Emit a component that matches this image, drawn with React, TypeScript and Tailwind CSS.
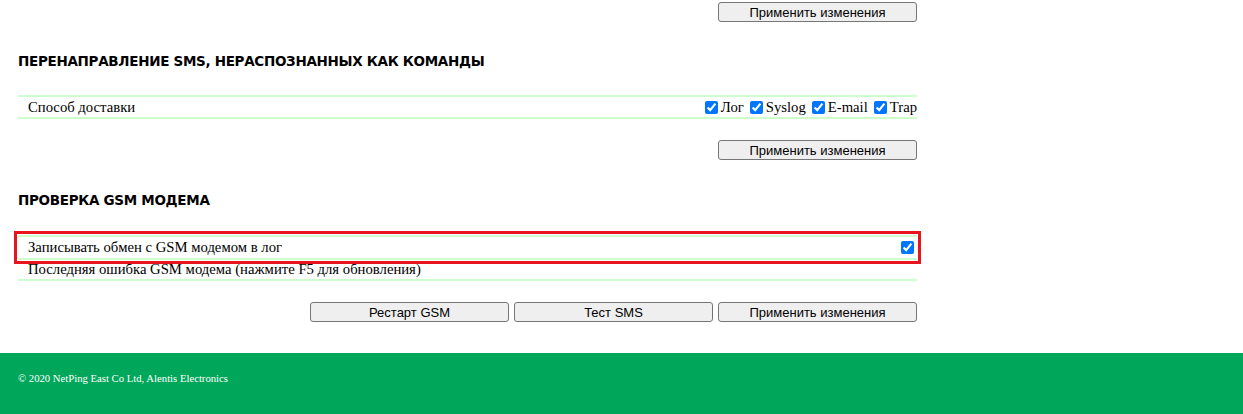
import React from "react";

const btn =
  "h-[20px] w-[199px] rounded-[3px] border border-[#767676] bg-[#efefef] text-[13px] leading-none text-black font-['Liberation_Sans',Arial,sans-serif]";

function Check() {
  return <input type="checkbox" defaultChecked className="mt-[3px] mb-[3px] ml-[4px] mr-[3px] h-[13px] w-[13px] align-[-2px]" />;
}

function Heading({ children, top }: { children: React.ReactNode; top: string }) {
  return (
    <h2 className={`${top} h-[20px] text-[13.5px] leading-[20px] font-bold text-black font-['DejaVu_Sans',Verdana,sans-serif] tracking-[-0.3px]`}>
      {children}
    </h2>
  );
}

export default function App() {
  return (
    <div className="min-h-[414px] bg-white flex flex-col font-['Liberation_Serif','Times_New_Roman',serif] text-[14.7px] text-black">
      <div className="ml-[18px] w-[899px] pt-[2px]">
        <div className="flex justify-end">
          <button className={btn}>Применить изменения</button>
        </div>

        <Heading top="mt-[29px]">ПЕРЕНАПРАВЛЕНИЕ SMS, НЕРАСПОЗНАННЫХ КАК КОМАНДЫ</Heading>

        <div className="mt-[24px] border-y-2 border-[#ccffcc] h-[24px] flex items-center justify-between pl-[10px]">
          <span>Способ доставки</span>
          <span className="flex items-center">
            <Check />
            <span>Лог</span>
            <span className="w-[2px]" />
            <Check />
            <span>Syslog</span>
            <span className="w-[2px]" />
            <Check />
            <span>E-mail</span>
            <span className="w-[2px]" />
            <Check />
            <span>Trap</span>
          </span>
        </div>

        <div className="mt-[21px] flex justify-end">
          <button className={btn}>Применить изменения</button>
        </div>

        <Heading top="mt-[30px]">ПРОВЕРКА GSM МОДЕМА</Heading>

        <div className="mt-[25px] border-y-2 border-[#ccffcc] h-[25px] flex items-center justify-between pl-[10px] outline-[3px] outline-solid outline-[#e8151f] outline-offset-[1px]">
          <span>Записывать обмен с GSM модемом в лог</span>
          <Check />
        </div>
        <div className="border-b-2 border-[#ccffcc] h-[21px] flex items-center pl-[10px]">
          <span>Последняя ошибка GSM модема (нажмите F5 для обновления)</span>
        </div>

        <div className="mt-[21px] flex justify-end gap-[5px]">
          <button className={btn}>Рестарт GSM</button>
          <button className={btn}>Тест SMS</button>
          <button className={btn}>Применить изменения</button>
        </div>
      </div>

      <footer className="mt-[31px] h-[61px] bg-[#00a65a] pl-[18px] pt-[18px] text-[10.7px] leading-[14px] text-white">
        © 2020 NetPing East Co Ltd, Alentis Electronics
      </footer>
    </div>
  );
}
